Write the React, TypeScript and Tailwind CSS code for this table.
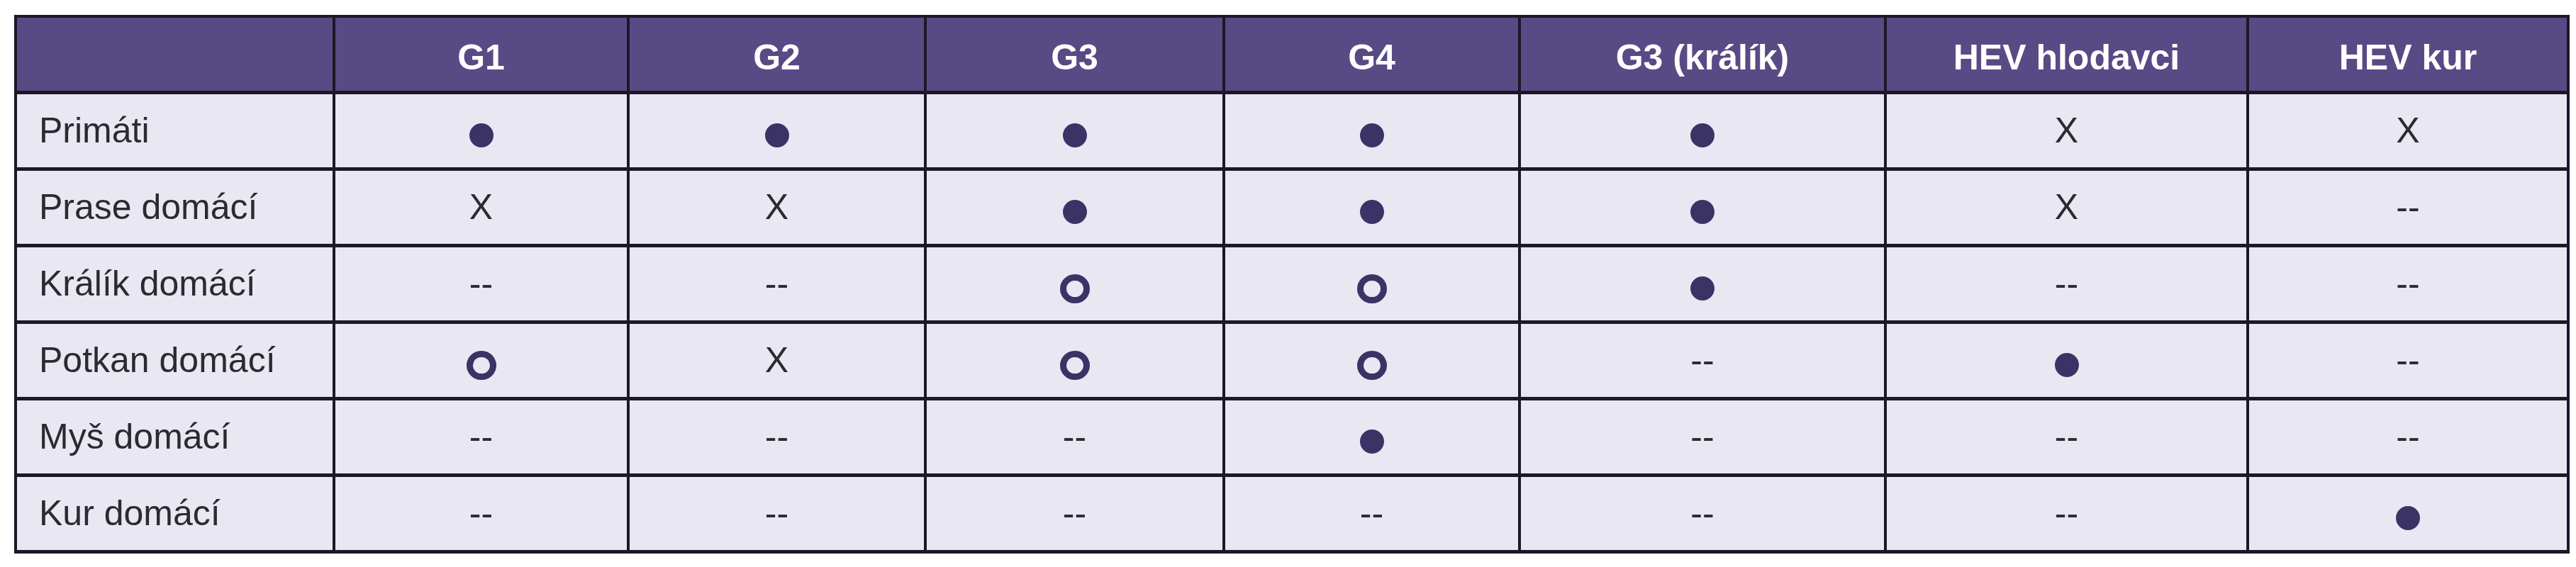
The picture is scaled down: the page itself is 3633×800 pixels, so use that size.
import React from 'react';

type Mark = 'full' | 'ring' | 'x' | 'none';

const columns = ['G1', 'G2', 'G3', 'G4', 'G3 (králík)', 'HEV hlodavci', 'HEV kur'];
const widths = ['w-[449px]', 'w-[415px]', 'w-[419px]', 'w-[421px]', 'w-[417px]', 'w-[516px]', 'w-[511px]', 'w-[452px]'];

const rows: { host: string; marks: Mark[] }[] = [
  { host: 'Primáti', marks: ['full', 'full', 'full', 'full', 'full', 'x', 'x'] },
  { host: 'Prase domácí', marks: ['x', 'x', 'full', 'full', 'full', 'x', 'none'] },
  { host: 'Králík domácí', marks: ['none', 'none', 'ring', 'ring', 'full', 'none', 'none'] },
  { host: 'Potkan domácí', marks: ['ring', 'x', 'ring', 'ring', 'none', 'full', 'none'] },
  { host: 'Myš domácí', marks: ['none', 'none', 'none', 'full', 'none', 'none', 'none'] },
  { host: 'Kur domácí', marks: ['none', 'none', 'none', 'none', 'none', 'none', 'full'] },
];

function Cell({ mark }: { mark: Mark }) {
  if (mark === 'full') {
    return <span className="mx-auto mt-[14px] block h-[34px] w-[34px] rounded-full bg-[#3b3366]" />;
  }
  if (mark === 'ring') {
    return <span className="mx-auto mt-[14px] block h-[41px] w-[42px] rounded-full border-[9px] border-[#3b3366]" />;
  }
  if (mark === 'x') {
    return <span>X</span>;
  }
  return <span>--</span>;
}

export default function App() {
  return (
    <div className="min-h-screen bg-white pl-[20px] pt-[21px] font-['Liberation_Sans',Arial,sans-serif]">
      <table className="w-[3600px] table-fixed border-collapse border-[4px] border-[#1c1828] text-[50px] leading-none">
        <colgroup>
          {widths.map((w, i) => (
            <col key={i} className={w} />
          ))}
        </colgroup>
        <thead>
          <tr className="h-[107px] bg-[#584a85]">
            <th className="border-[4px] border-b-[5px] border-[#1c1828]" />
            {columns.map((c) => (
              <th
                key={c}
                className="border-[4px] border-b-[5px] border-[#1c1828] pt-[10px] text-center font-bold text-white"
              >
                {c}
              </th>
            ))}
          </tr>
        </thead>
        <tbody className="bg-[#e9e7f2] text-[#2b2a30]">
          {rows.map((r) => (
            <tr key={r.host} className="h-[108px]">
              <td className="border-[4px] border-y-[5px] border-[#1c1828] pl-[31px] text-left">{r.host}</td>
              {r.marks.map((m, i) => (
                <td key={i} className="border-[4px] border-y-[5px] border-[#1c1828] text-center">
                  <Cell mark={m} />
                </td>
              ))}
            </tr>
          ))}
        </tbody>
      </table>
    </div>
  );
}
